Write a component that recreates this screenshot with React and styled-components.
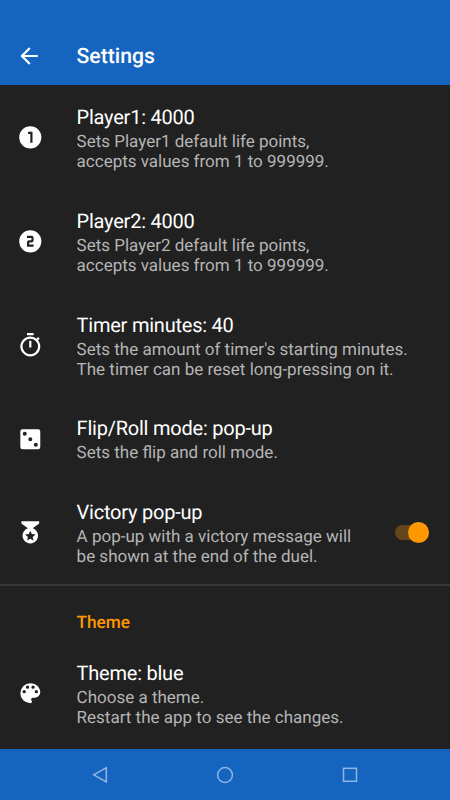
import React from "react";
import styled, { createGlobalStyle } from "styled-components";

const Global = createGlobalStyle`
  * { box-sizing: border-box; }
  body { margin: 0; background: #212121; font-family: Roboto, "Liberation Sans", sans-serif; text-rendering: geometricPrecision; }
`;
const Screen = styled.div`
  width: 450px; height: 800px; overflow: hidden;
  display: flex; flex-direction: column; background: #212121; color: #fff;
`;
const AppBar = styled.header`
  height: 85px; flex: none; padding: 26px 0 0 16.3px; background: #1565c0;
  display: flex; align-items: center;
`;
const Back = styled.div`width: 60.2px; display: flex;`;
const Title = styled.h1`
  margin: 0; padding-top: 2px; font-size: 21.2px; line-height: 28px; font-weight: 500;
`;
const List = styled.main`flex: 1; min-height: 0; overflow: hidden;`;
const Row = styled.section`
  display: flex; align-items: center; height: ${(p) => p.$height}px; padding: 1px 20.8px 0 16.8px;
`;
const IconSlot = styled.div`width: 59.8px; flex: none; display: flex;`;
const Copy = styled.div`flex: 1; padding-top: 1.6px; white-space: pre;`;
const Name = styled.div`font-size: 20px; line-height: 25px; letter-spacing: -0.23px;`;
const Detail = styled.div`margin-top: 2px; font-size: 17px; line-height: 20px; color: #b5b5b5;`;
const Track = styled.div`
  width: 34.5px; height: 15.5px; border-radius: 8px; background: #64461a;
  display: flex; align-items: center; justify-content: flex-end;
`;
const Thumb = styled.div`width: 21.5px; height: 21.5px; flex: none; border-radius: 50%; background: #ff9800;`;
const Divider = styled.div`height: 2px; background: #383838;`;
const SectionTitle = styled.h2`
  margin: 0; padding: 26px 0 0 76.5px; height: 55px; font-size: 17.2px; line-height: 22px;
  font-weight: 500; color: #ff9800;
`;
const NavBar = styled.nav`
  height: 51px; flex: none; background: #1565c0; padding: 0 37px;
  display: flex; justify-content: space-around; align-items: center;
`;

const Icon = ({ children, size = 26.6 }) => (
  <svg width={size} height={size} viewBox="0 0 24 24" fill="#fff">{children}</svg>
);
const icons = {
  one: <path d="M12 2a10 10 0 1 0 0 20 10 10 0 0 0 0-20zm2 15h-2V9h-2V7h4z" />,
  two: <path d="M12 2a10 10 0 1 0 0 20 10 10 0 0 0 0-20zm3 9a2 2 0 0 1-2 2h-2v2h4v2H9v-4a2 2 0 0 1 2-2h2V9H9V7h4a2 2 0 0 1 2 2z" />,
  timer: <path d="M15 1H9v2h6V1zm-4 13h2V8h-2v6zm8.030-6.610 1.420-1.420c-.430-.510-.900-.990-1.410-1.410l-1.420 1.420A8.960 8.960 0 0 0 12 4a9 9 0 1 0 7.030 3.390zM12 20a7 7 0 1 1 0-14 7 7 0 0 1 0 14z" />,
  dice: <path fillRule="evenodd" d="M5 3h14a2 2 0 0 1 2 2v14a2 2 0 0 1-2 2H5a2 2 0 0 1-2-2V5a2 2 0 0 1 2-2zm2 2.200a1.800 1.800 0 1 0 0 3.600 1.800 1.800 0 0 0 0-3.600zm5 5a1.800 1.800 0 1 0 0 3.600 1.800 1.800 0 0 0 0-3.600zm5 5a1.800 1.800 0 1 0 0 3.600 1.800 1.800 0 0 0 0-3.600z" />,
  medal: <path fillRule="evenodd" d="M20 2H4v2l5.810 4.360a7 7 0 1 0 4.380 0L20 4V2zm-5.060 17.500L12 17.780 9.060 19.500l.780-3.340-2.590-2.240 3.410-.290L12 10.500l1.340 3.130 3.410.290-2.590 2.240.780 3.340z" />,
  palette: <path d="M17.500 12a1.500 1.500 0 1 1 0-3 1.500 1.500 0 0 1 0 3m-3-4a1.500 1.500 0 1 1 0-3 1.500 1.500 0 0 1 0 3m-5 0a1.500 1.500 0 1 1 0-3 1.500 1.500 0 0 1 0 3m-3 4a1.500 1.500 0 1 1 0-3 1.500 1.500 0 0 1 0 3M12 3a9 9 0 0 0 0 18 1.500 1.500 0 0 0 1.500-1.500c0-.390-.150-.740-.390-1-.230-.270-.380-.620-.380-1a1.500 1.500 0 0 1 1.500-1.500H16a5 5 0 0 0 5-5c0-4.420-4.030-8-9-8z" />,
};
const rows = [
  { icon: "one", height: 104, name: "Player1: 4000", detail: "Sets Player1 default life points,\naccepts values from 1 to 999999." },
  { icon: "two", height: 104, name: "Player2: 4000", detail: "Sets Player2 default life points,\naccepts values from 1 to 999999." },
  { icon: "timer", height: 104, name: "Timer minutes: 40", detail: "Sets the amount of timer's starting minutes.\nThe timer can be reset long-pressing on it." },
  { icon: "dice", height: 83, name: "Flip/Roll mode: pop-up", detail: "Sets the flip and roll mode." },
  { icon: "medal", height: 104, on: true, name: "Victory pop-up", detail: "A pop-up with a victory message will\nbe shown at the end of the duel." },
];
const Setting = ({ icon, height, name, detail, on }) => (
  <Row $height={height}>
    <IconSlot><Icon>{icons[icon]}</Icon></IconSlot>
    <Copy><Name>{name}</Name><Detail>{detail}</Detail></Copy>
    {on && <Track><Thumb /></Track>}
  </Row>
);

export default function App() {
  return (
    <Screen>
      <Global />
      <AppBar>
        <Back><Icon size={26}><path d="M20 11H7.830l5.590-5.590L12 4l-8 8 8 8 1.410-1.410L7.830 13H20z" /></Icon></Back>
        <Title>Settings</Title>
      </AppBar>
      <List>
        {rows.map((r) => <Setting key={r.name} {...r} />)}
        <Divider />
        <SectionTitle>Theme</SectionTitle>
        <Setting icon="palette" height={104} name="Theme: blue" detail={"Choose a theme.\nRestart the app to see the changes."} />
      </List>
      <NavBar>
        <svg width="18" height="18" viewBox="0 0 18 18" fill="none" stroke="#8fb5e2" strokeWidth="1.5"><path d="M15.300 1.700v14.200L2.800 8.800z" /></svg>
        <svg width="18" height="18" viewBox="0 0 18 18" fill="none" stroke="#8fb5e2" strokeWidth="1.5"><circle cx="9" cy="9" r="7.400" /></svg>
        <svg width="18" height="18" viewBox="0 0 18 18" fill="none" stroke="#8fb5e2" strokeWidth="1.5"><rect x="2.500" y="2.300" width="13" height="13" /></svg>
      </NavBar>
    </Screen>
  );
}
